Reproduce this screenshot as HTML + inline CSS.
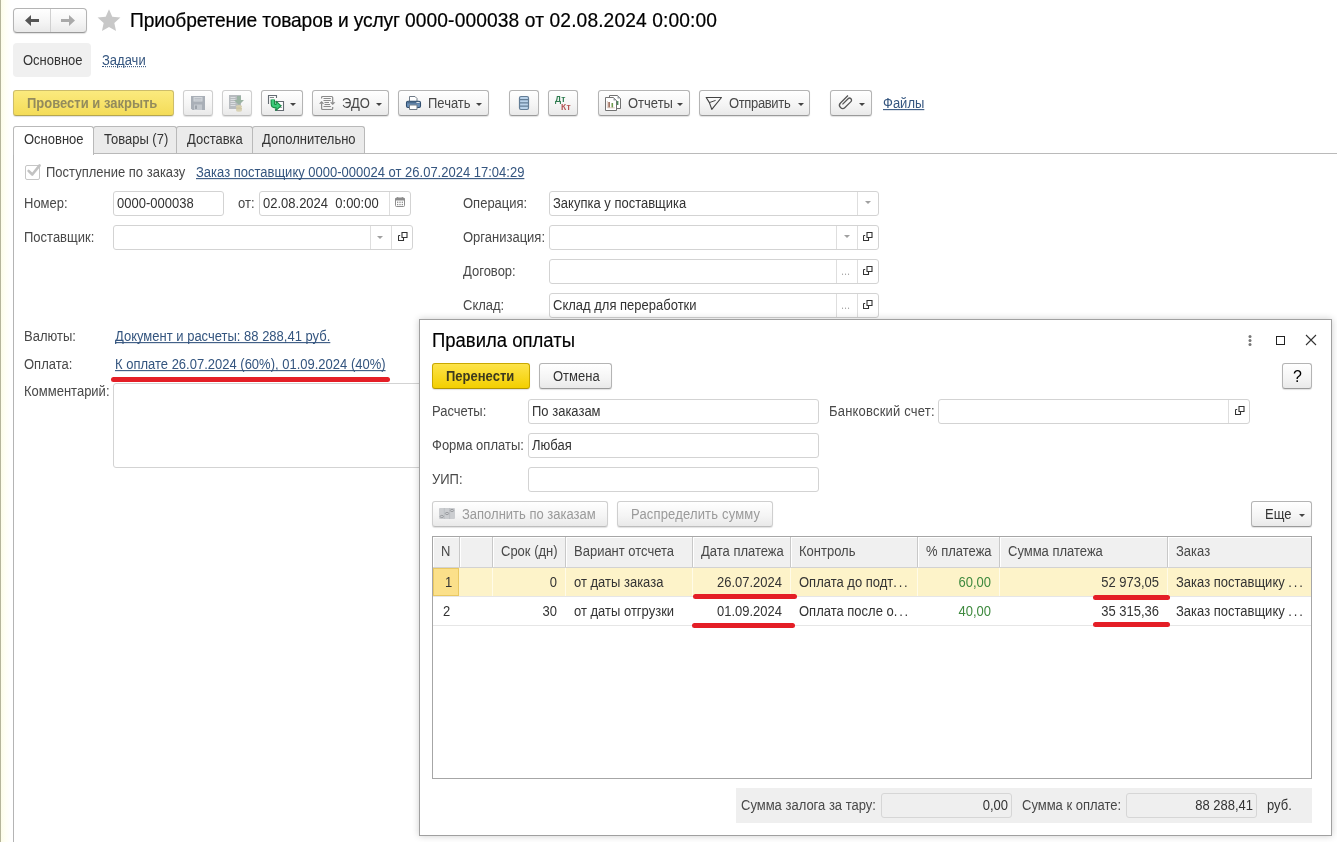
<!DOCTYPE html>
<html><head><meta charset="utf-8">
<style>
html,body{margin:0;padding:0}
body{width:1337px;height:842px;overflow:hidden;position:relative;background:#fff;font-family:"Liberation Sans",sans-serif}
#root{position:absolute;left:0;top:0;width:1337px;height:842px;will-change:transform}
.a{position:absolute}
.t{position:absolute;font-size:13px;line-height:15px;white-space:nowrap;color:#484848;transform:scaleY(1.08);transform-origin:0 12px}
.v{color:#333}
.lnk{color:#34557f;text-decoration:underline;text-underline-offset:1px;text-decoration-skip-ink:none}
.btn{position:absolute;box-sizing:border-box;border:1px solid #b4b4b4;border-bottom-color:#9a9a9a;border-radius:3px;background:linear-gradient(#ffffff,#f4f4f4 60%,#e9e9e9);box-shadow:0 1px 1px rgba(0,0,0,.12)}
.dis{border-color:#cfcfcf;border-bottom-color:#bdbdbd}
.inp{position:absolute;box-sizing:border-box;border:1px solid #d3d3d3;border-radius:3px;background:#fff}
.dv{position:absolute;top:0;bottom:0;width:1px;background:#dedede}
.tri{position:absolute;width:0;height:0;border-left:3px solid transparent;border-right:3px solid transparent;border-top:3px solid #444}
.trig{position:absolute;width:0;height:0;border-left:3px solid transparent;border-right:3px solid transparent;border-top:3px solid #a0a0a0}
.tab{position:absolute;box-sizing:border-box;top:126px;height:28px;border:1px solid #b9b9b9;border-bottom:none;border-radius:3px 3px 0 0;background:#ebebeb}
.th{position:absolute;top:537px;height:30px;background:#f0f0f0;border-right:1px solid #c8c8c8;box-sizing:border-box;box-shadow:inset 1px 1px 0 #fff}
.red{position:absolute;height:5px;background:#e41e26;border-radius:3px}
</style></head><body><div id="root">

<!-- left edge -->
<div class="a" style="left:0;top:0;width:1px;height:842px;background:#b5b59a"></div>
<div class="a" style="left:1px;top:0;width:10px;height:842px;background:linear-gradient(90deg,#fdfde8,#fffff4 40%,#fff)"></div>

<!-- nav buttons -->
<div class="btn" style="left:13px;top:8px;width:74px;height:25px;border-radius:4px"></div>
<div class="a" style="left:50px;top:9px;width:1px;height:23px;background:#d0d0d0"></div>
<svg class="a" style="left:24px;top:14px" width="16" height="13" viewBox="0 0 16 13"><path d="M1 6.5 L7 1 V5 H15 V8 H7 V12 Z" fill="#555"/></svg>
<svg class="a" style="left:60px;top:14px" width="16" height="13" viewBox="0 0 16 13"><path d="M15 6.5 L9 1 V5 H1 V8 H9 V12 Z" fill="#a9a9a9"/></svg>
<svg class="a" style="left:97px;top:9px" width="24" height="23" viewBox="0 0 24 23"><path d="M12.00 0.30 L15.29 7.77 L23.41 8.59 L17.33 14.03 L19.05 22.01 L12.00 17.90 L4.95 22.01 L6.67 14.03 L0.59 8.59 L8.71 7.77 Z" fill="#c8c8c8"/></svg>
<div class="t" style="left:130px;top:9px;font-size:19.2px;line-height:23px;color:#000;-webkit-text-stroke:0.2px #000"><span style="letter-spacing:-0.14px">Приобретение товаров и услуг </span><span style="letter-spacing:0.12px">0000-000038 от 02.08.2024 0:00:00</span></div>

<!-- section links -->
<div class="a" style="left:13px;top:43px;width:78px;height:34px;background:#f0f0f0;border-radius:4px"></div>
<div class="t" style="left:23px;top:53px;color:#333">Основное</div>
<div class="t" style="left:102px;top:53px;color:#34557f;border-bottom:1px dotted #34557f;height:13px">Задачи</div>

<!-- toolbar -->
<div class="btn" style="left:13px;top:90px;width:161px;height:26px;background:linear-gradient(#fbea7e,#f4dc58);border-color:#cdbd6a;border-bottom-color:#b5a650"></div>
<div class="t" style="left:27px;top:96px;font-weight:bold;color:#938b5c">Провести и закрыть</div>

<div class="btn dis" style="left:183px;top:90px;width:30px;height:26px"></div>
<div class="btn dis" style="left:222px;top:90px;width:30px;height:26px"></div>
<div class="btn" style="left:261px;top:90px;width:42px;height:26px"></div>
<div class="btn" style="left:312px;top:90px;width:77px;height:26px"></div>
<div class="btn" style="left:398px;top:90px;width:91px;height:26px"></div>
<div class="btn" style="left:509px;top:90px;width:30px;height:26px"></div>
<div class="btn" style="left:548px;top:90px;width:30px;height:26px"></div>
<div class="btn" style="left:598px;top:90px;width:92px;height:26px"></div>
<div class="btn" style="left:699px;top:90px;width:111px;height:26px"></div>
<div class="btn" style="left:830px;top:90px;width:42px;height:26px"></div>

<div class="t" style="left:342px;top:96px">ЭДО</div>
<div class="t" style="left:428px;top:96px">Печать</div>
<div class="t" style="left:628px;top:96px">Отчеты</div>
<div class="t" style="left:729px;top:96px;letter-spacing:-0.35px">Отправить</div>
<div class="t lnk" style="left:883px;top:96px">Файлы</div>

<!-- toolbar icons -->
<svg class="a" style="left:191px;top:96px" width="14" height="14" viewBox="0 0 14 14"><path d="M0 0H14V14H1.5L0 12.5Z" fill="#a9afb7"/><rect x="2.5" y="1" width="9" height="4.5" fill="#d3d7dc"/><rect x="3.5" y="2.2" width="7" height="0.8" fill="#b5bac1"/><rect x="3.5" y="3.6" width="7" height="0.8" fill="#b5bac1"/><rect x="3" y="8.5" width="8" height="5.5" fill="#c3c8ce"/><rect x="4" y="9.5" width="2" height="3.5" fill="#9da3ab"/></svg>
<svg class="a" style="left:228px;top:94px" width="18" height="18" viewBox="0 0 18 18"><rect x="1" y="1" width="12" height="14" fill="#b7bbbf"/><rect x="2.5" y="3" width="5" height="0.9" fill="#dfe2e5"/><rect x="2.5" y="5" width="5" height="0.9" fill="#dfe2e5"/><rect x="2.5" y="7" width="5" height="0.9" fill="#dfe2e5"/><rect x="2.5" y="9" width="5" height="0.9" fill="#dfe2e5"/><rect x="2.5" y="11" width="5" height="0.9" fill="#dfe2e5"/><path d="M9 2 H13 V6 H16 L11 11 L6 6 H9 Z" fill="#9bb3a3"/><ellipse cx="11" cy="12.5" rx="3" ry="1.5" fill="#d6cfae"/><ellipse cx="11" cy="14.8" rx="3" ry="1.5" fill="#cfc7a3"/><ellipse cx="11" cy="16.5" rx="3" ry="1.3" fill="#d9d3b6"/></svg>
<svg class="a" style="left:266px;top:93px" width="20" height="20" viewBox="0 0 20 20"><path d="M2.5 11 V2.5 H10.5 V5" fill="none" stroke="#646b72" stroke-width="1.1"/><path d="M3.8 4.5 H8" stroke="#646b72" stroke-width="0.8"/><path d="M9.5 8.5 H17.5 V17.5 H9.5 V16" fill="#fff" stroke="#646b72" stroke-width="1.1"/><path d="M12 12.5 H16 M12 14.5 H16" stroke="#8a9096" stroke-width="0.8"/><path d="M6.8 6.5 V10.5 Q6.8 13.2 9.5 13.2 H11" fill="none" stroke="#1a8a45" stroke-width="4.4"/><path d="M10 8.2 L15 12.8 L10 17.4 Z" fill="#3ccb7a" stroke="#1a8a45" stroke-width="1.1" stroke-linejoin="round"/><path d="M6.8 6.5 V10.5 Q6.8 13.2 9.5 13.2 H11.5" fill="none" stroke="#3ccb7a" stroke-width="2.3"/></svg>
<svg class="a" style="left:316px;top:92px" width="24" height="22" viewBox="0 0 24 22"><g fill="none" stroke="#8a8a8a" stroke-width="1.2"><path d="M5.6 6.5 V5.6 Q5.6 4.5 6.7 4.5 H15.6 Q16.7 4.5 16.7 5.6 V10.5"/><path d="M5.6 11.5 V16.6 Q5.6 17.5 6.7 17.5 H15.6 Q16.7 17.5 16.7 16.6 V15"/><path d="M7.5 6.5 H14.8 M7.5 8.5 H14.8 M8.5 10.5 H13 M8.5 12.5 H14 M7.5 14.5 H14.8"/></g><path d="M3 11.7 L5.6 9 L8.2 11.7 Z" fill="#8a8a8a"/><path d="M14 10.3 L16.7 13 L19.4 10.3 Z" fill="#8a8a8a"/></svg>
<svg class="a" style="left:405px;top:95px" width="17" height="16" viewBox="0 0 17 16"><path d="M4.5 1.5 H10 L12 3.5 V6.5 H4.5 Z" fill="#fff" stroke="#6f7a86" stroke-width="1"/><rect x="1.5" y="6.2" width="14" height="6.3" rx="1.5" fill="#6b90b8" stroke="#2f4d6e" stroke-width="1.1"/><path d="M2.5 7.8 H14.5" stroke="#33506f" stroke-width="0.8"/><rect x="11.5" y="7" width="1.3" height="1" fill="#fff"/><rect x="13.2" y="7" width="1.3" height="1" fill="#fff"/><path d="M4.5 10 H12 V14.5 H4.5 Z" fill="#fff" stroke="#6f7a86" stroke-width="1"/></svg>
<svg class="a" style="left:518px;top:95px" width="12" height="16" viewBox="0 0 12 16"><rect x="1.5" y="1.5" width="9" height="13" rx="1.5" fill="#b9d2ea" stroke="#637d96" stroke-width="1.2"/><path d="M2 4.6 H10 M2 7.9 H10 M2 11.2 H10" stroke="#637d96" stroke-width="1.2"/></svg>
<div class="a" style="left:555px;top:94px;font:bold 8.5px/10px 'Liberation Sans';color:#2e7b4f;letter-spacing:0.3px">Дт</div>
<div class="a" style="left:561px;top:102px;font:bold 8.5px/10px 'Liberation Sans';color:#b45454;letter-spacing:0.3px">Кт</div>
<svg class="a" style="left:603px;top:93px" width="20" height="20" viewBox="0 0 20 20"><path d="M6.5 4.5 V2.5 H14.5 L17.5 5.5 V15.5 H13.5" fill="#fff" stroke="#727272" stroke-width="1"/><path d="M14.5 2.5 V5.5 H17.5" fill="#9aa0a6"/><path d="M2.5 4.5 H10.5 L13.5 7.5 V17.5 H2.5 Z" fill="#fff" stroke="#727272" stroke-width="1"/><path d="M10.5 4.5 V7.5 H13.5" fill="#9aa0a6"/><rect x="5.3" y="9" width="1.6" height="5.5" fill="#9b6a58"/><rect x="8.5" y="10" width="1.6" height="4.5" fill="#6c9a4e"/><rect x="13.8" y="8" width="1.6" height="4" fill="#4f8a5a"/><path d="M4.3 8 V14.8 H11.8" fill="none" stroke="#c8a89a" stroke-width="0.6"/></svg>
<svg class="a" style="left:704px;top:95px" width="20" height="17" viewBox="0 0 20 17"><path d="M2.2 2.5 H17.5 L7.8 14.4 L5.4 7.6 Z" fill="none" stroke="#444" stroke-width="1.15" stroke-linejoin="round"/><path d="M5.4 7.6 L11.6 5.4" fill="none" stroke="#444" stroke-width="1"/></svg>
<svg class="a" style="left:836px;top:94px" width="18" height="18" viewBox="0 0 18 18"><g transform="rotate(45 9 9)"><path d="M5.8 1.6 V12.2 A3.2 3.2 0 0 0 12.2 12.2 V3.8 A2 2 0 0 0 8.2 3.8 V11.8" fill="none" stroke="#555" stroke-width="1.3"/></g></svg>
<div class="tri" style="left:290px;top:103px"></div>
<div class="tri" style="left:376px;top:103px"></div>
<div class="tri" style="left:476px;top:103px"></div>
<div class="tri" style="left:677px;top:103px"></div>
<div class="tri" style="left:798px;top:103px"></div>
<div class="tri" style="left:859px;top:103px"></div>

<!-- tabs -->
<div class="a" style="left:364px;top:153px;width:973px;height:1px;background:#bababa"></div>
<div class="a" style="left:13px;top:153px;width:1px;height:689px;background:#b4b4b4"></div>
<div class="tab" style="left:93px;width:84px"></div>
<div class="tab" style="left:176px;width:77px"></div>
<div class="tab" style="left:252px;width:113px"></div>
<div class="a" style="left:93px;top:153px;width:272px;height:1px;background:#b9b9b9"></div>
<div class="tab" style="left:13px;width:81px;height:29px;background:#fff"></div>
<div class="t" style="left:24px;top:132px;color:#333">Основное</div>
<div class="t" style="left:104px;top:132px;color:#333">Товары (7)</div>
<div class="t" style="left:187px;top:132px;color:#333">Доставка</div>
<div class="t" style="left:262px;top:132px;color:#333">Дополнительно</div>

<!-- form -->
<div class="a" style="left:25px;top:165px;width:13px;height:13px;border:1px solid #c6c6c6;border-radius:2px;background:#fff"></div>
<svg class="a" style="left:25px;top:162px" width="18" height="18" viewBox="0 0 18 18"><path d="M3.6 8.8 L7.3 12.5 L14.6 3.4" stroke="#c2c2c2" stroke-width="2.6" fill="none" stroke-linecap="round" stroke-linejoin="round"/></svg>
<div class="t" style="left:46px;top:165px">Поступление по заказу</div>
<div class="t lnk" style="left:196px;top:165px">Заказ поставщику 0000-000024 от 26.07.2024 17:04:29</div>

<div class="t" style="left:24px;top:196px">Номер:</div>
<div class="inp" style="left:113px;top:191px;width:111px;height:25px"></div>
<div class="t v" style="left:117px;top:196px">0000-000038</div>
<div class="t" style="left:238px;top:196px">от:</div>
<div class="inp" style="left:259px;top:191px;width:152px;height:25px"><div class="dv" style="left:129px"></div></div>
<div class="t v" style="left:263px;top:196px">02.08.2024&nbsp; 0:00:00</div>

<div class="t" style="left:24px;top:230px">Поставщик:</div>
<div class="inp" style="left:113px;top:225px;width:300px;height:25px"><div class="dv" style="left:256px"></div><div class="dv" style="left:277px"></div></div>
<div class="trig" style="left:377px;top:236px"></div>

<div class="t" style="left:463px;top:196px">Операция:</div>
<div class="inp" style="left:549px;top:191px;width:330px;height:25px"><div class="dv" style="left:307px"></div></div>
<div class="t v" style="left:553px;top:196px">Закупка у поставщика</div>
<div class="trig" style="left:865px;top:201px"></div>

<div class="t" style="left:463px;top:230px">Организация:</div>
<div class="inp" style="left:549px;top:225px;width:330px;height:25px"><div class="dv" style="left:286px"></div><div class="dv" style="left:307px"></div></div>
<div class="trig" style="left:844px;top:235px"></div>

<div class="t" style="left:463px;top:264px">Договор:</div>
<div class="inp" style="left:549px;top:259px;width:330px;height:25px"><div class="dv" style="left:286px"></div><div class="dv" style="left:307px"></div></div>
<div class="t" style="left:841px;top:264px;color:#aaa;font-size:11px">...</div>

<div class="t" style="left:463px;top:298px">Склад:</div>
<div class="inp" style="left:549px;top:293px;width:330px;height:25px"><div class="dv" style="left:286px"></div><div class="dv" style="left:307px"></div></div>
<div class="t v" style="left:553px;top:298px">Склад для переработки</div>
<div class="t" style="left:841px;top:298px;color:#aaa;font-size:11px">...</div>

<div class="t" style="left:24px;top:329px">Валюты:</div>
<div class="t lnk" style="left:115px;top:329px">Документ и расчеты: 88 288,41 руб.</div>
<div class="t" style="left:24px;top:357px">Оплата:</div>
<div class="t lnk" style="left:115px;top:357px">К оплате 26.07.2024 (60%), 01.09.2024 (40%)</div>
<div class="red" style="left:111px;top:377px;width:279px"></div>
<div class="t" style="left:24px;top:384px">Комментарий:</div>
<div class="inp" style="left:113px;top:383px;width:400px;height:85px"></div>

<svg class="a" style="left:395px;top:197px" width="10" height="10" viewBox="0 0 10 10"><rect x="0.5" y="1" width="9" height="8.5" rx="1" fill="#fff" stroke="#8c8c8c" stroke-width="1"/><rect x="0.5" y="1" width="9" height="2.5" fill="#8c8c8c"/><rect x="2.2" y="0" width="1" height="1.5" fill="#8c8c8c"/><rect x="6.8" y="0" width="1" height="1.5" fill="#8c8c8c"/><g fill="#8c8c8c"><rect x="2" y="4.6" width="1.3" height="1.3"/><rect x="4.35" y="4.6" width="1.3" height="1.3"/><rect x="6.7" y="4.6" width="1.3" height="1.3"/><rect x="2" y="6.9" width="1.3" height="1.3"/><rect x="4.35" y="6.9" width="1.3" height="1.3"/><rect x="6.7" y="6.9" width="1.3" height="1.3"/></g></svg>
<svg class="a" style="left:398px;top:231px" width="10" height="10" viewBox="0 0 10 10"><path d="M4 1.5 H9 V6.5 H4 Z" fill="none" stroke="#333" stroke-width="1.1"/><path d="M0.5 4.5 V9.5 H5.5 V7 M0.5 4.5 H2.2" fill="none" stroke="#333" stroke-width="1.1"/></svg>
<svg class="a" style="left:863px;top:231px" width="10" height="10" viewBox="0 0 10 10"><path d="M4 1.5 H9 V6.5 H4 Z" fill="none" stroke="#333" stroke-width="1.1"/><path d="M0.5 4.5 V9.5 H5.5 V7 M0.5 4.5 H2.2" fill="none" stroke="#333" stroke-width="1.1"/></svg>
<svg class="a" style="left:863px;top:265px" width="10" height="10" viewBox="0 0 10 10"><path d="M4 1.5 H9 V6.5 H4 Z" fill="none" stroke="#333" stroke-width="1.1"/><path d="M0.5 4.5 V9.5 H5.5 V7 M0.5 4.5 H2.2" fill="none" stroke="#333" stroke-width="1.1"/></svg>
<svg class="a" style="left:863px;top:299px" width="10" height="10" viewBox="0 0 10 10"><path d="M4 1.5 H9 V6.5 H4 Z" fill="none" stroke="#333" stroke-width="1.1"/><path d="M0.5 4.5 V9.5 H5.5 V7 M0.5 4.5 H2.2" fill="none" stroke="#333" stroke-width="1.1"/></svg>
<!-- dialog -->
<div class="a" style="left:419px;top:319px;width:913px;height:517px;box-sizing:border-box;border:1px solid #a0a0a0;background:#fff;box-shadow:0 0 7px rgba(0,0,0,.2)"></div>
<div class="t" style="left:432px;top:330px;font-size:18.5px;line-height:22px;color:#000;-webkit-text-stroke:0.15px #000">Правила оплаты</div>

<svg class="a" style="left:1247px;top:334px" width="6" height="13" viewBox="0 0 6 13"><circle cx="3" cy="2.5" r="1.5" fill="#777"/><circle cx="3" cy="6.5" r="1.5" fill="#777"/><circle cx="3" cy="10.5" r="1.5" fill="#777"/></svg>
<div class="a" style="left:1276px;top:336px;width:7px;height:7px;border:1px solid #222"></div>
<svg class="a" style="left:1305px;top:334px" width="12" height="12" viewBox="0 0 12 12"><path d="M1 1 L11 11 M11 1 L1 11" stroke="#333" stroke-width="1.1"/></svg>
<div class="btn" style="left:432px;top:363px;width:98px;height:26px;background:linear-gradient(#fde34a,#f3cf00);border-color:#c9a800;border-bottom-color:#b39500"></div>
<div class="t" style="left:446px;top:369px;font-weight:bold;color:#3d3a1e">Перенести</div>
<div class="btn" style="left:539px;top:363px;width:73px;height:26px"></div>
<div class="t" style="left:553px;top:369px;color:#333">Отмена</div>
<div class="btn" style="left:1282px;top:363px;width:30px;height:26px"></div>
<div class="t" style="left:1293px;top:368px;font-size:16px;line-height:18px;color:#000">?</div>

<div class="t" style="left:432px;top:404px">Расчеты:</div>
<div class="inp" style="left:528px;top:399px;width:291px;height:25px"></div>
<div class="t v" style="left:532px;top:404px">По заказам</div>
<div class="t" style="left:829px;top:404px;letter-spacing:0.2px">Банковский счет:</div>
<div class="inp" style="left:938px;top:399px;width:312px;height:25px"><div class="dv" style="left:289px"></div></div>
<svg class="a" style="left:1235px;top:405px" width="10" height="10" viewBox="0 0 10 10"><path d="M4 1.5 H9 V6.5 H4 Z" fill="none" stroke="#333" stroke-width="1.1"/><path d="M0.5 4.5 V9.5 H5.5 V7 M0.5 4.5 H2.2" fill="none" stroke="#333" stroke-width="1.1"/></svg>

<div class="t" style="left:432px;top:438px">Форма оплаты:</div>
<div class="inp" style="left:528px;top:433px;width:291px;height:25px"></div>
<div class="t v" style="left:532px;top:438px">Любая</div>
<div class="t" style="left:432px;top:472px">УИП:</div>
<div class="inp" style="left:528px;top:467px;width:291px;height:25px"></div>

<div class="btn dis" style="left:432px;top:501px;width:176px;height:26px"></div>
<svg class="a" style="left:439px;top:508px" width="16" height="11" viewBox="0 0 16 11"><rect x="0" y="0" width="16" height="11" rx="1" fill="#cbcdd0"/><path d="M5.3 0 V11 M10.6 0 V11" stroke="#b9bcc0" stroke-width="0.8"/><ellipse cx="2.8" cy="8.5" rx="1.7" ry="1.1" fill="none" stroke="#8f9296" stroke-width="0.8"/><ellipse cx="8" cy="5.5" rx="1.7" ry="1.1" fill="none" stroke="#8f9296" stroke-width="0.8"/><ellipse cx="13" cy="2.5" rx="1.7" ry="1.1" fill="none" stroke="#8f9296" stroke-width="0.8"/></svg>
<div class="t" style="left:462px;top:507px;color:#9a9a9a">Заполнить по заказам</div>
<div class="btn dis" style="left:617px;top:501px;width:156px;height:26px"></div>
<div class="t" style="left:631px;top:507px;color:#9a9a9a;letter-spacing:0.17px">Распределить сумму</div>
<div class="btn" style="left:1251px;top:501px;width:61px;height:26px"></div>
<div class="t" style="left:1265px;top:507px;color:#333">Еще</div>
<div class="tri" style="left:1299px;top:514px"></div>

<!-- table -->
<div class="a" style="left:432px;top:536px;width:880px;height:243px;box-sizing:border-box;border:1px solid #a6a6a6;background:#fff"></div>
<div class="th" style="left:433px;width:27px"></div>
<div class="th" style="left:460px;width:33px"></div>
<div class="th" style="left:493px;width:73px"></div>
<div class="th" style="left:566px;width:127px"></div>
<div class="th" style="left:693px;width:98px"></div>
<div class="th" style="left:791px;width:127px"></div>
<div class="th" style="left:918px;width:82px"></div>
<div class="th" style="left:1000px;width:168px"></div>
<div class="th" style="left:1168px;width:143px;border-right:none"></div>
<div class="a" style="left:433px;top:567px;width:878px;height:1px;background:#d2d2d2"></div>
<div class="t" style="left:441px;top:544px">N</div>
<div class="t" style="left:501px;top:544px">Срок (дн)</div>
<div class="t" style="left:574px;top:544px">Вариант отсчета</div>
<div class="t" style="left:701px;top:544px">Дата платежа</div>
<div class="t" style="left:799px;top:544px">Контроль</div>
<div class="t" style="left:926px;top:544px">% платежа</div>
<div class="t" style="left:1008px;top:544px">Сумма платежа</div>
<div class="t" style="left:1176px;top:544px">Заказ</div>

<div class="a" style="left:433px;top:568px;width:878px;height:28px;background:#fdf3c9"></div>
<div class="a" style="left:492px;top:568px;width:1px;height:28px;background:#fffbe8"></div><div class="a" style="left:565px;top:568px;width:1px;height:28px;background:#fffbe8"></div><div class="a" style="left:692px;top:568px;width:1px;height:28px;background:#fffbe8"></div><div class="a" style="left:790px;top:568px;width:1px;height:28px;background:#fffbe8"></div><div class="a" style="left:917px;top:568px;width:1px;height:28px;background:#fffbe8"></div><div class="a" style="left:999px;top:568px;width:1px;height:28px;background:#fffbe8"></div><div class="a" style="left:1167px;top:568px;width:1px;height:28px;background:#fffbe8"></div>
<div class="a" style="left:433px;top:568px;width:26px;height:28px;box-sizing:border-box;background:#fbe08a;border:1.5px solid #e9c862"></div>
<div class="a" style="left:433px;top:596px;width:878px;height:1px;background:#e6e6e6"></div>
<div class="a" style="left:433px;top:625px;width:878px;height:1px;background:#e6e6e6"></div>

<div class="t v" style="left:445px;top:575px">1</div>
<div class="t v" style="right:780px;top:575px">0</div>
<div class="t v" style="left:574px;top:575px">от даты заказа</div>
<div class="t v" style="right:555px;top:575px">26.07.2024</div>
<div class="t v" style="left:799px;top:575px">Оплата до подт<span style="letter-spacing:1.8px">...</span></div>
<div class="t" style="right:346px;top:575px;color:#3f8a3f">60,00</div>
<div class="t v" style="right:178px;top:575px">52 973,05</div>
<div class="t v" style="left:1176px;top:575px">Заказ поставщику <span style="letter-spacing:1.8px">...</span></div>

<div class="t v" style="left:443px;top:604px">2</div>
<div class="t v" style="right:780px;top:604px">30</div>
<div class="t v" style="left:574px;top:604px">от даты отгрузки</div>
<div class="t v" style="right:555px;top:604px">01.09.2024</div>
<div class="t v" style="left:799px;top:604px">Оплата после о<span style="letter-spacing:1.8px">...</span></div>
<div class="t" style="right:346px;top:604px;color:#3f8a3f">40,00</div>
<div class="t v" style="right:178px;top:604px">35 315,36</div>
<div class="t v" style="left:1176px;top:604px">Заказ поставщику <span style="letter-spacing:1.8px">...</span></div>

<div class="red" style="left:693px;top:594px;width:104px"></div>
<div class="red" style="left:692px;top:623px;width:103px"></div>
<div class="red" style="left:1093px;top:595px;width:77px"></div>
<div class="red" style="left:1093px;top:622px;width:77px"></div>

<!-- footer -->
<div class="a" style="left:736px;top:788px;width:576px;height:35px;background:#efefef"></div>
<div class="t" style="left:741px;top:798px">Сумма залога за тару:</div>
<div class="inp" style="left:881px;top:793px;width:131px;height:25px;background:#efefef;border-color:#d6d6d6"></div>
<div class="t v" style="right:329px;top:798px">0,00</div>
<div class="t" style="left:1022px;top:798px">Сумма к оплате:</div>
<div class="inp" style="left:1126px;top:793px;width:131px;height:25px;background:#efefef;border-color:#d6d6d6"></div>
<div class="t v" style="right:84px;top:798px">88 288,41</div>
<div class="t v" style="left:1267px;top:798px">руб.</div>

</div></body></html>
